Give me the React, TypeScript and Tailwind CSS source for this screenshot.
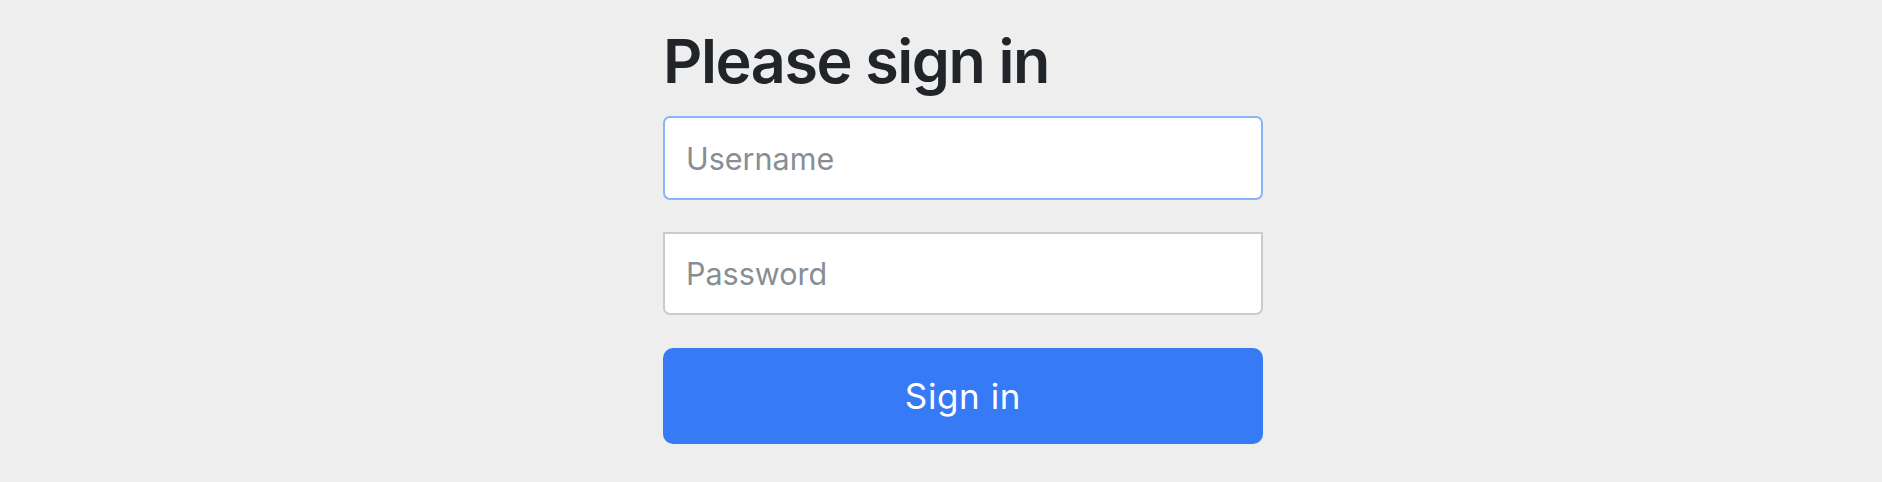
export default function App() {
  return (
    <div className="min-h-[482px] w-full bg-[#eeeeee] font-['Inter',_'Noto_Sans',_sans-serif]">
      <div className="mx-auto w-[644px] pl-[44px] pt-[24px]">
        <h2 className="text-[61px] font-semibold leading-[74px] tracking-[-1.4px] text-[#212529]">
          Please sign in
        </h2>
        <form className="mt-[18px] flex flex-col" onSubmit={(e) => e.preventDefault()}>
          <input
            type="text"
            placeholder="Username"
            className="h-[84px] w-[600px] rounded-[7px] border-2 border-[#8ab4f8] bg-white px-[21px] text-[30.5px] text-[#212529] outline-none placeholder:text-[#878e95]"
          />
          <input
            type="password"
            placeholder="Password"
            className="mt-[32px] h-[83px] w-[600px] rounded-b-[7px] border-2 border-[#cbcbcb] bg-white px-[21px] text-[30.5px] text-[#212529] outline-none placeholder:text-[#878e95]"
          />
          <button
            type="submit"
            className="mt-[33px] h-[96px] w-[600px] rounded-[10px] bg-[#377af6] text-[35px] tracking-[0.6px] text-white"
          >
            Sign in
          </button>
        </form>
      </div>
    </div>
  )
}
